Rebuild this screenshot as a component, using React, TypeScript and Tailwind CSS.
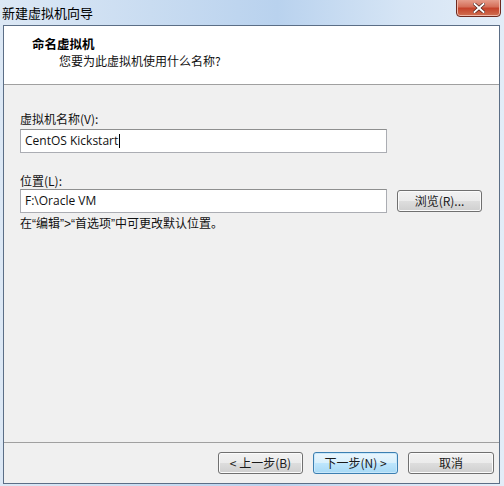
import React from "react";

const font = { fontFamily: '"Noto Sans CJK SC", "Noto Sans", sans-serif' };
const latin = { fontFamily: '"Open Sans", "Noto Sans", sans-serif' };
const q = { fontFamily: '"Liberation Sans", sans-serif' };

function WinButton({ children, primary = false, className = "" }: { children: React.ReactNode; primary?: boolean; className?: string }) {
  return (
    <div
      className={
        "flex items-center justify-center rounded-[3px] border text-[12px] text-[#1a1a1a] " +
        (primary
          ? "border-[#3c7fb1] bg-[linear-gradient(to_bottom,#eaf6fd_0%,#d9f0fc_50%,#bee6fd_51%,#a7d9f5_100%)] shadow-[inset_0_0_0_1px_#c8e8fb] "
          : "border-[#707070] bg-[linear-gradient(to_bottom,#f2f2f2_0%,#ebebeb_50%,#dddddd_51%,#cfcfcf_100%)] shadow-[inset_0_0_0_1px_#fbfbfb] ") +
        className
      }
    >
      {children}
    </div>
  );
}

export default function App() {
  return (
    <div
      style={font}
      className="relative flex h-[486px] w-[504px] flex-col overflow-hidden bg-[linear-gradient(to_right,#dce8f5_0%,#c9dcf1_30%,#b9d2ee_55%,#d6e5f5_80%,#e3edf8_100%)]"
    >
      {/* title bar */}
      <div className="flex h-[25px] items-center pl-[2px] text-[13px] leading-none text-black">
        新建虚拟机向导
      </div>
      <div className="absolute right-[3px] top-[-2px] flex h-[19px] w-[45px] items-center justify-center rounded-b-[4px] border border-[#6d2a20] bg-[linear-gradient(to_bottom,#e8a493_0%,#d5705a_45%,#c5432b_55%,#d07052_100%)] shadow-[inset_0_0_0_1px_#f0b7a8]">
        <svg width="12" height="10" viewBox="0 0 12 10">
          <path d="M1.5 1 L10.5 9 M10.5 1 L1.5 9" stroke="#3b1410" strokeWidth="3.2" strokeLinecap="square" />
          <path d="M1.5 1 L10.5 9 M10.5 1 L1.5 9" stroke="#ffffff" strokeWidth="2" strokeLinecap="square" />
        </svg>
      </div>

      {/* client area */}
      <div className="ml-[3px] flex h-[459px] w-[497px] flex-col border border-[#5b6e86] bg-[#f0f0f0]">
        {/* header */}
        <div className="h-[59px] border-b border-[#a0a0a0] bg-white">
          <div className="pl-[28px] pt-[10px] text-[12.5px] font-bold leading-[16px] text-black">命名虚拟机</div>
          <div className="pl-[55px] pt-[1px] text-[12px] leading-[16px] text-[#111]">您要为此虚拟机使用什么名称?</div>
        </div>

        {/* body */}
        <div className="flex flex-1 flex-col pl-[16px] pt-[26px] text-[12px] text-[#111]">
          <div className="leading-[16px]">虚拟机名称(V):</div>
          <div style={latin} className="mt-[2px] flex h-[24px] w-[367px] items-center border border-[#abadb3] border-t-[#8e8f8f] bg-white pl-[4px] text-[12px]">
            CentOS Kickstart<span className="ml-[1px] inline-block h-[14px] w-[1px] bg-black" />
          </div>
          <div className="mt-[20px] leading-[16px]">位置(L):</div>
          <div className="flex items-center gap-[10px]">
            <div style={latin} className="flex h-[24px] w-[367px] items-center border border-[#abadb3] border-t-[#8e8f8f] bg-white pl-[4px] text-[12px]">
              F:\Oracle VM
            </div>
            <WinButton className="h-[22px] w-[85px]">浏览(R)...</WinButton>
          </div>
          <div className="mt-[2px] text-[12px] leading-[16px]">
            在<span style={q}>“</span>编辑<span style={q}>”&gt;“</span>首选项<span style={q}>”</span>中可更改默认位置。
          </div>
        </div>

        {/* footer */}
        <div className="flex h-[41px] items-center justify-end gap-[10px] border-t border-[#a0a0a0] pr-[5px]">
          <WinButton className="h-[22px] w-[85px]">&lt; 上一步(B)</WinButton>
          <WinButton primary className="h-[22px] w-[85px]">下一步(N) &gt;</WinButton>
          <WinButton className="h-[22px] w-[86px]">取消</WinButton>
        </div>
      </div>
    </div>
  );
}
